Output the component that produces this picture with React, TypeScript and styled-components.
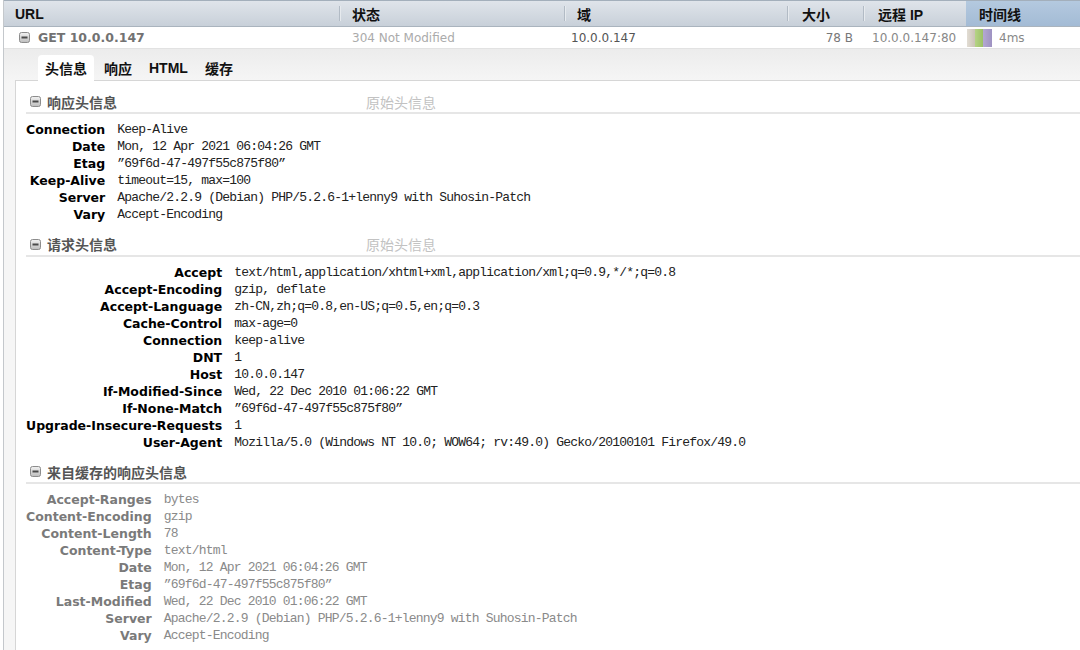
import React from "react";
import styled, { createGlobalStyle } from "styled-components";

const GlobalStyle = createGlobalStyle`
  html, body { margin: 0; padding: 0; background: #ffffff; }
  body { font-family: "DejaVu Sans", "Noto Sans CJK SC", sans-serif; }
  #root { min-height: 100vh; display: flex; flex-direction: column; }
`;

const CJK = `"Noto Sans CJK SC", sans-serif`;
const COLS = "336px 225px 223px 76px 102px 1fr";

const Root = styled.div`
  flex: 1;
  display: flex;
  flex-direction: column;
  margin-left: 3px;
  border-left: 1px solid #c4c8cc;
  min-height: 650px;
`;

const HeaderRow = styled.div`
  display: grid;
  grid-template-columns: ${COLS};
  height: 25px;
  border-top: 1px solid #a3afbb;
  border-bottom: 1px solid #aab4be;
  background: linear-gradient(#dfe4ea, #c8d0d9);
`;

const HeaderCell = styled.div<{ $pad: number; $active?: boolean; $sep?: boolean }>`
  position: relative;
  display: flex;
  align-items: center;
  padding-left: ${(p) => p.$pad}px;
  font-family: "Liberation Sans", ${CJK};
  font-weight: 700;
  font-size: 14px;
  color: #111;
  background: ${(p) => (p.$active ? "linear-gradient(#b4c9df, #a3bbd5)" : "transparent")};
  &::after {
    content: "";
    display: ${(p) => (p.$sep ? "block" : "none")};
    position: absolute;
    right: 0;
    top: 5px;
    bottom: 5px;
    width: 1px;
    background: #b2bbc5;
    box-shadow: 1px 0 0 #e6eaee;
  }
`;

const DataRow = styled.div`
  display: grid;
  grid-template-columns: ${COLS};
  height: 21px;
  background: #ffffff;
  font-size: 12px;
`;

const DataCell = styled.div<{ $pad?: number; $right?: boolean; $color: string }>`
  display: flex;
  align-items: center;
  justify-content: ${(p) => (p.$right ? "flex-end" : "flex-start")};
  padding-left: ${(p) => (p.$right ? 0 : p.$pad ?? 0)}px;
  padding-right: ${(p) => (p.$right ? 11 : 0)}px;
  color: ${(p) => p.$color};
  white-space: nowrap;
`;

const UrlText = styled.span`
  font-weight: 700;
  font-size: 12.5px;
  color: #727272;
  margin-left: 8px;
`;

const TimeBar = styled.div`
  display: flex;
  height: 18px;
  margin-right: 7px;
`;

const Seg = styled.div<{ $from: string; $to: string; $w: number }>`
  width: ${(p) => p.$w}px;
  background: linear-gradient(90deg, ${(p) => p.$from}, ${(p) => p.$to});
`;

const Details = styled.div`
  flex: 1;
  display: flex;
  flex-direction: column;
  border-top: 1px solid #e2e2e2;
  background: linear-gradient(#ececec, #f6f6f6 34px, #f6f6f6);
`;

const Tabs = styled.div`
  display: flex;
  gap: 3px;
  padding: 6px 0 0 34px;
  position: relative;
  z-index: 1;
`;

const Tab = styled.div<{ $active?: boolean }>`
  height: 26px;
  padding: 0 7px;
  display: flex;
  align-items: center;
  font-family: "Liberation Sans", ${CJK};
  font-weight: 700;
  font-size: 14px;
  color: #111;
  border-radius: 4px 4px 0 0;
  background: ${(p) => (p.$active ? "#ffffff" : "transparent")};
  margin-bottom: -1px;
`;

const Panel = styled.div`
  flex: 1;
  margin-left: 11px;
  background: #ffffff;
  border-left: 1px solid #d6d6d6;
  border-top: 1px solid #d6d6d6;
  padding: 10px 0 0 10px;
`;

const Section = styled.div`
  & + & {
    margin-top: 10.5px;
  }
`;

const SectionHeader = styled.div`
  display: grid;
  grid-template-columns: 340px auto;
  align-items: center;
  height: 21px;
  border-bottom: 2px solid #e6e6e6;
`;

const SectionTitle = styled.div`
  display: flex;
  align-items: center;
  gap: 6px;
  padding-left: 4px;
  font-family: ${CJK};
  font-weight: 700;
  font-size: 14px;
  color: #555;
`;

const RawLink = styled.div`
  font-family: ${CJK};
  font-size: 14px;
  color: #c2c2c2;
`;

const Rows = styled.div`
  display: grid;
  grid-template-columns: max-content 1fr;
  column-gap: 12px;
  margin-top: 7px;
`;

const Label = styled.div<{ $muted?: boolean }>`
  text-align: right;
  font-weight: 700;
  font-size: 12.5px;
  line-height: 17px;
  color: ${(p) => (p.$muted ? "#7a7a7a" : "#000")};
  white-space: nowrap;
`;

const Value = styled.div<{ $muted?: boolean }>`
  font-family: "Liberation Mono", monospace;
  font-size: 13px;
  letter-spacing: -0.8px;
  line-height: 17px;
  color: ${(p) => (p.$muted ? "#8a8a8a" : "#222")};
  white-space: pre;
`;

const MinusIcon = () => (
  <svg width="11" height="11" viewBox="0 0 11 11">
    <defs>
      <linearGradient id="mg" x1="0" y1="0" x2="0" y2="1">
        <stop offset="0" stopColor="#f2f2f2" />
        <stop offset="1" stopColor="#bdbdbd" />
      </linearGradient>
    </defs>
    <rect x="0.5" y="0.5" width="10" height="10" rx="2" fill="url(#mg)" stroke="#8c8c8c" />
    <rect x="2.5" y="4.5" width="6" height="2" fill="#4a4a4a" />
  </svg>
);

type Pair = [string, string];

const responseHeaders: Pair[] = [
  ["Connection", "Keep-Alive"],
  ["Date", "Mon, 12 Apr 2021 06:04:26 GMT"],
  ["Etag", "\u201d69f6d-47-497f55c875f80\u201d"],
  ["Keep-Alive", "timeout=15, max=100"],
  ["Server", "Apache/2.2.9 (Debian) PHP/5.2.6-1+lenny9 with Suhosin-Patch"],
  ["Vary", "Accept-Encoding"],
];

const requestHeaders: Pair[] = [
  ["Accept", "text/html,application/xhtml+xml,application/xml;q=0.9,*/*;q=0.8"],
  ["Accept-Encoding", "gzip, deflate"],
  ["Accept-Language", "zh-CN,zh;q=0.8,en-US;q=0.5,en;q=0.3"],
  ["Cache-Control", "max-age=0"],
  ["Connection", "keep-alive"],
  ["DNT", "1"],
  ["Host", "10.0.0.147"],
  ["If-Modified-Since", "Wed, 22 Dec 2010 01:06:22 GMT"],
  ["If-None-Match", "\u201d69f6d-47-497f55c875f80\u201d"],
  ["Upgrade-Insecure-Requests", "1"],
  ["User-Agent", "Mozilla/5.0 (Windows NT 10.0; WOW64; rv:49.0) Gecko/20100101 Firefox/49.0"],
];

const cachedHeaders: Pair[] = [
  ["Accept-Ranges", "bytes"],
  ["Content-Encoding", "gzip"],
  ["Content-Length", "78"],
  ["Content-Type", "text/html"],
  ["Date", "Mon, 12 Apr 2021 06:04:26 GMT"],
  ["Etag", "\u201d69f6d-47-497f55c875f80\u201d"],
  ["Last-Modified", "Wed, 22 Dec 2010 01:06:22 GMT"],
  ["Server", "Apache/2.2.9 (Debian) PHP/5.2.6-1+lenny9 with Suhosin-Patch"],
  ["Vary", "Accept-Encoding"],
];

const HeaderSection = ({
  title,
  raw,
  rows,
  muted,
}: {
  title: string;
  raw?: boolean;
  rows: Pair[];
  muted?: boolean;
}) => (
  <Section>
    <SectionHeader>
      <SectionTitle>
        <MinusIcon />
        {title}
      </SectionTitle>
      {raw ? <RawLink>原始头信息</RawLink> : <span />}
    </SectionHeader>
    <Rows>
      {rows.map(([k, v], i) => (
        <React.Fragment key={i}>
          <Label $muted={muted}>{k}</Label>
          <Value $muted={muted}>{v}</Value>
        </React.Fragment>
      ))}
    </Rows>
  </Section>
);

export default function App() {
  return (
    <>
      <GlobalStyle />
      <Root>
        <HeaderRow>
          <HeaderCell $pad={11} $sep>URL</HeaderCell>
          <HeaderCell $pad={12} $sep>状态</HeaderCell>
          <HeaderCell $pad={12} $sep>域</HeaderCell>
          <HeaderCell $pad={14} $sep>大小</HeaderCell>
          <HeaderCell $pad={14}>远程 IP</HeaderCell>
          <HeaderCell $pad={13} $active>时间线</HeaderCell>
        </HeaderRow>
        <DataRow>
          <DataCell $pad={15} $color="#727272">
            <MinusIcon />
            <UrlText>GET 10.0.0.147</UrlText>
          </DataCell>
          <DataCell $pad={12} $color="#ababab">304 Not Modified</DataCell>
          <DataCell $pad={6} $color="#555">10.0.0.147</DataCell>
          <DataCell $right $color="#777">78 B</DataCell>
          <DataCell $pad={8} $color="#888">10.0.0.147:80</DataCell>
          <DataCell $pad={1} $color="#888">
            <TimeBar>
              <Seg $w={8} $from="#e2ddd4" $to="#cbc3b6" />
              <Seg $w={8} $from="#b6d486" $to="#9cc066" />
              <Seg $w={9} $from="#b4a8d2" $to="#9e92c2" />
            </TimeBar>
            4ms
          </DataCell>
        </DataRow>
        <Details>
          <Tabs>
            <Tab $active>头信息</Tab>
            <Tab>响应</Tab>
            <Tab>HTML</Tab>
            <Tab>缓存</Tab>
          </Tabs>
          <Panel>
            <HeaderSection title="响应头信息" raw rows={responseHeaders} />
            <HeaderSection title="请求头信息" raw rows={requestHeaders} />
            <HeaderSection title="来自缓存的响应头信息" rows={cachedHeaders} muted />
          </Panel>
        </Details>
      </Root>
    </>
  );
}
